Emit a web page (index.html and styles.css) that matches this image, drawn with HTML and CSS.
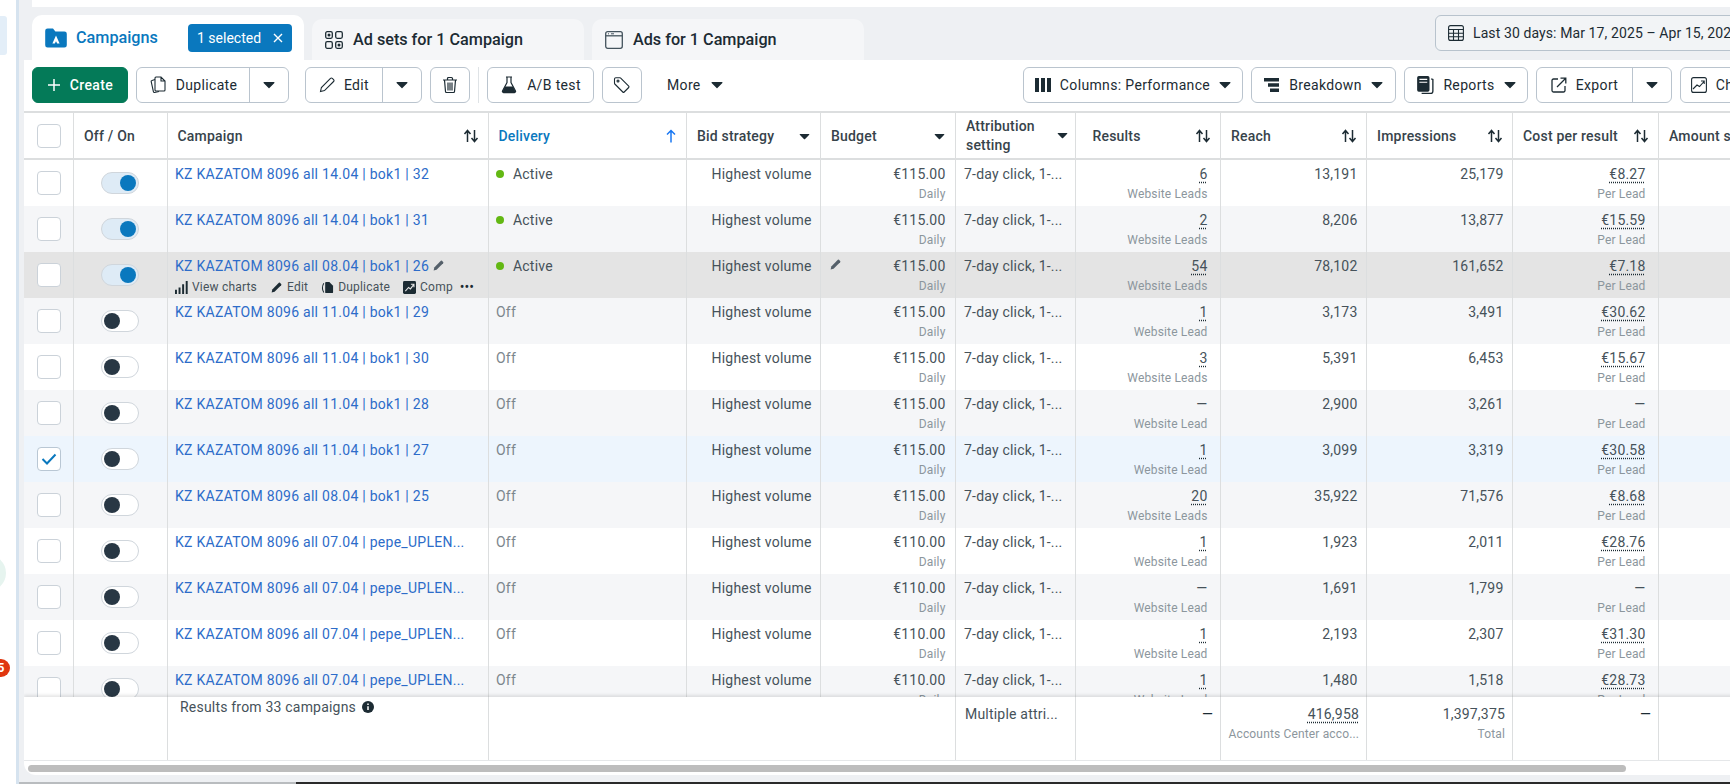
FILE: index.html
```html
<!DOCTYPE html>
<html lang="en">
<head>
<meta charset="utf-8">
<title>Campaigns</title>
<link rel="stylesheet" href="styles.css">
</head>
<body>
<svg class="defs" width="0" height="0" aria-hidden="true">
  <symbol id="caret" viewBox="0 0 12 8"><path d="M1 1h10a.6.6 0 0 1 .4 1L6.4 7a.6.6 0 0 1-.8 0L.6 2A.6.6 0 0 1 1 1z" fill="currentColor"/></symbol>
  <symbol id="sort" viewBox="0 0 16 14"><path d="M4.5 13V2M1.5 5l3-3.5L7.5 5M11.5 1v11M8.5 9l3 3.5 3-3.5" fill="none" stroke="currentColor" stroke-width="1.5"/></symbol>
  <symbol id="pencil" viewBox="0 0 16 16"><path d="M2 14l.8-3.6L10.900 2.300a1 1 0 0 1 1.400 0l1.400 1.400a1 1 0 0 1 0 1.400L5.600 13.200 2 14z" fill="currentColor"/></symbol>
</svg>

<aside class="rail">
  <div class="rail-tab"></div>
  <div class="rail-mint"></div>
  <div class="rail-badge">5</div>
</aside>

<main class="main">
  <div class="topbar"></div>

  <div class="tabs">
    <div class="tab tab-active">
      <svg class="tab-icon-folder" viewBox="0 0 20 20"><path d="M1 4a2 2 0 0 1 2-2h4.500l2 2.500H17a2 2 0 0 1 2 2V16a2 2 0 0 1-2 2H3a2 2 0 0 1-2-2z" fill="#0a78be"/><path d="M10 8l3 6.500h-2L10 12.800 9 14.500H7z" fill="#fff"/></svg>
      <span class="tab-label-active">Campaigns</span>
      <span class="pill">1 selected <svg class="pill-x" viewBox="0 0 12 12"><path d="M2 2l8 8M10 2l-8 8" stroke="#fff" stroke-width="1.400"/></svg></span>
    </div>
    <div class="tab tab-off">
      <svg class="tab-icon" viewBox="0 0 18 18" fill="none" stroke="#1c2b33" stroke-width="1.300"><rect x=".7" y=".7" width="6.600" height="6.600" rx="1.500"/><rect x="10.700" y=".7" width="6.600" height="6.600" rx="1.500"/><rect x=".7" y="10.700" width="6.600" height="6.600" rx="1.500"/><rect x="10.700" y="10.700" width="6.600" height="6.600" rx="1.500"/><circle cx="4" cy="4" r="1.500" fill="#1c2b33" stroke="none"/><circle cx="14" cy="14" r="1.500" fill="#1c2b33" stroke="none"/></svg>
      <span>Ad sets for 1 Campaign</span>
    </div>
    <div class="tab tab-off">
      <svg class="tab-icon" viewBox="0 0 18 18" fill="none" stroke="#44535d" stroke-width="1.300"><rect x=".7" y=".7" width="16.600" height="16.600" rx="2"/><path d="M.7 4.800h16.600"/><path d="M3 2.800h1M6 2.800h3" stroke-width="1"/></svg>
      <span>Ads for 1 Campaign</span>
    </div>
    <button class="date">
      <svg class="ic16" viewBox="0 0 16 16" fill="none" stroke="#1c2b33" stroke-width="1.100"><rect x=".6" y=".6" width="14.800" height="14.800" rx="2"/><path d="M.6 4.500h14.800M.6 8.200h14.800M.6 11.800h14.800M5.500 4.500v10.900M10.500 4.500v10.900"/></svg>
      <span>Last 30 days: Mar 17, 2025 – Apr 15, 2025</span>
    </button>
  </div>

  <section class="panel">
    <div class="toolbar">
      <div class="toolbar-left">
        <button class="btn btn-create"><svg class="ic14" viewBox="0 0 14 14"><path d="M7 1v12M1 7h12" stroke="#fff" stroke-width="1.500"/></svg>Create</button>
        <div class="split split-dup">
          <button class="btn-main"><svg class="ic18" viewBox="0 0 16 18" fill="none" stroke="#1c2b33" stroke-width="1.100"><path d="M6 1h5l4 4v9a1 1 0 0 1-1 1H6a1 1 0 0 1-1-1V2a1 1 0 0 1 1-1zM11 1v4h4"/><path d="M5 3.500L2 4.500a1 1 0 0 0-.8 1.200l2.200 10a1 1 0 0 0 1.200.8L9 15.500"/></svg>Duplicate</button>
          <button class="btn-caret"><svg class="caret" width="12" height="8"><use href="#caret"/></svg></button>
        </div>
        <div class="split split-edit">
          <button class="btn-main"><svg class="ic16" viewBox="0 0 16 16" fill="none" stroke="#1c2b33" stroke-width="1.100"><path d="M1.500 14.500l.9-4L11.500 1.400a1.300 1.300 0 0 1 1.800 0l1.300 1.300a1.300 1.300 0 0 1 0 1.800L5.500 13.600z"/></svg>Edit</button>
          <button class="btn-caret"><svg class="caret" width="12" height="8"><use href="#caret"/></svg></button>
        </div>
        <button class="btn btn-icon"><svg class="ic18" viewBox="0 0 16 18" fill="none" stroke="#1c2b33" stroke-width="1.200"><path d="M1 4h14M5.500 4V2.500a1 1 0 0 1 1-1h3a1 1 0 0 1 1 1V4M2.500 4l1 11.500a1 1 0 0 0 1 1h7a1 1 0 0 0 1-1l1-11.500M6 6.500v8M8 6.500v8M10 6.500v8"/></svg></button>
        <span class="divider"></span>
        <button class="btn btn-ab"><svg class="ic18" viewBox="0 0 16 18"><path d="M5 1h6M6 1v5.500L1.500 15a1.200 1.200 0 0 0 1 1.600h11a1.200 1.200 0 0 0 1-1.600L10 6.500V1" fill="none" stroke="#1c2b33" stroke-width="1.200"/><path d="M4 10.500h8l2.500 5-.5 1H2l-.5-1z" fill="#1c2b33"/></svg>A/B test</button>
        <button class="btn btn-icon btn-tag"><svg class="ic18" viewBox="0 0 18 18" fill="none" stroke="#1c2b33" stroke-width="1.100"><path d="M1.500 3v4.300a1 1 0 0 0 .3.700l8 8a1 1 0 0 0 1.400 0l4.500-4.500a1 1 0 0 0 0-1.400l-8-8a1 1 0 0 0-.7-.3H2.800A1.300 1.300 0 0 0 1.500 3z"/><circle cx="5" cy="5" r="1"/></svg></button>
        <button class="btn-more">More<svg class="caret" width="12" height="8"><use href="#caret"/></svg></button>
      </div>
      <div class="toolbar-right">
        <button class="btn btn-columns"><svg class="ic16" viewBox="0 0 16 14"><path d="M0 0h4v14H0zM6 0h4v14H6zM12 0h4v14h-4z" fill="#1c2b33"/></svg>Columns: Performance<svg class="caret" width="12" height="8"><use href="#caret"/></svg></button>
        <button class="btn btn-break"><svg class="ic16" viewBox="0 0 16 14"><path d="M0 0h15v3.400H0zM4 5.300h11v3.400H4zM6 10.600h9V14H6z" fill="#1c2b33"/></svg>Breakdown<svg class="caret" width="12" height="8"><use href="#caret"/></svg></button>
        <button class="btn btn-reports"><svg class="ic18" viewBox="0 0 16 16"><path d="M1 1.500A1.500 1.500 0 0 1 2.500 0h8A1.500 1.500 0 0 1 12 1.500v11a1.500 1.500 0 0 1-1.500 1.500h-8A1.500 1.500 0 0 1 1 12.500z" fill="#1c2b33"/><path d="M3 3h7M3 5.500h7" stroke="#fff"/><path d="M13.500 2.500l1.500.5v10.500a2 2 0 0 1-2 2H5" fill="none" stroke="#1c2b33" stroke-width="1.200"/></svg>Reports<svg class="caret" width="12" height="8"><use href="#caret"/></svg></button>
        <div class="split split-export">
          <button class="btn-main"><svg class="ic16" viewBox="0 0 16 16" fill="none" stroke="#1c2b33" stroke-width="1.300"><path d="M7 2H2.500A1.500 1.500 0 0 0 1 3.500v10A1.500 1.500 0 0 0 2.500 15h10a1.500 1.500 0 0 0 1.500-1.500V9"/><path d="M6 10l8.500-8.500M9.500 1.200h5.300v5.300"/></svg>Export</button>
          <button class="btn-caret"><svg class="caret" width="12" height="8"><use href="#caret"/></svg></button>
        </div>
        <button class="btn btn-chart"><svg class="ic16" viewBox="0 0 16 16" fill="none" stroke="#1c2b33" stroke-width="1.100"><rect x=".6" y=".6" width="14.800" height="14.800" rx="2"/><path d="M2 12l4-4 2.500 1.500L13 4.500M10 4h3.200v3"/></svg>Charts</button>
      </div>
    </div>

    <div class="grid-scroll">
      <table class="grid">
        <colgroup><col class="c0"><col class="c1"><col class="c2"><col class="c3"><col class="c4"><col class="c5"><col class="c6"><col class="c7"><col class="c8"><col class="c9"><col class="c10"><col class="c11"></colgroup>
        <thead>
          <tr>
            <th class="th-check"><span class="check"></span></th>
            <th><div class="th-in">Off / On</div></th>
            <th><div class="th-in">Campaign<svg class="sort" width="16" height="14"><use href="#sort"/></svg></div></th>
            <th class="th-active"><div class="th-in">Delivery<svg class="sort sort-up" width="10" height="14" viewBox="0 0 10 14"><path d="M5 13.500V1.500M1 5.500l4-4 4 4" fill="none" stroke="currentColor" stroke-width="1.500"/></svg></div></th>
            <th><div class="th-in">Bid strategy<svg class="caret-th" width="11" height="7"><use href="#caret"/></svg></div></th>
            <th><div class="th-in">Budget<svg class="caret-th" width="11" height="7"><use href="#caret"/></svg></div></th>
            <th><div class="th-in">Attribution<br>setting<svg class="caret-th" width="11" height="7"><use href="#caret"/></svg></div></th>
            <th class="th-results"><div class="th-in">Results<svg class="sort" width="16" height="14"><use href="#sort"/></svg></div></th>
            <th><div class="th-in">Reach<svg class="sort" width="16" height="14"><use href="#sort"/></svg></div></th>
            <th><div class="th-in">Impressions<svg class="sort" width="16" height="14"><use href="#sort"/></svg></div></th>
            <th><div class="th-in">Cost per result<svg class="sort" width="16" height="14"><use href="#sort"/></svg></div></th>
            <th class="th-last"><div class="th-in">Amount spent</div></th>
          </tr>
        </thead>
        <tbody>
          <tr><td class="td-check"><span class="check"></span></td><td class="td-toggle"><span class="toggle on"><i></i></span></td><td><a class="name">KZ KAZATOM 8096 all 14.04 | bok1 | 32</a></td><td><span class="dot"></span>Active</td><td class="num">Highest volume</td><td class="num money">€115.00<small>Daily</small></td><td class="attr">7-day click, 1-...</td><td class="num wide"><u>6</u><small>Website Leads</small></td><td class="num">13,191</td><td class="num">25,179</td><td class="num wide"><u>€8.27</u><small>Per Lead</small></td><td></td></tr>
          <tr><td class="td-check"><span class="check"></span></td><td class="td-toggle"><span class="toggle on"><i></i></span></td><td><a class="name">KZ KAZATOM 8096 all 14.04 | bok1 | 31</a></td><td><span class="dot"></span>Active</td><td class="num">Highest volume</td><td class="num money">€115.00<small>Daily</small></td><td class="attr">7-day click, 1-...</td><td class="num wide"><u>2</u><small>Website Leads</small></td><td class="num">8,206</td><td class="num">13,877</td><td class="num wide"><u>€15.59</u><small>Per Lead</small></td><td></td></tr>
          <tr class="hover"><td class="td-check"><span class="check"></span></td><td class="td-toggle"><span class="toggle on"><i></i></span></td><td><a class="name">KZ KAZATOM 8096 all 08.04 | bok1 | 26</a><svg class="name-pen" width="13" height="13"><use href="#pencil"/></svg>
            <div class="actions">
              <span class="act"><svg class="act-ic" viewBox="0 0 12 12"><path d="M0 8h1.800v4H0zM3.300 6h1.800v6H3.300zM6.600 3h1.800v9H6.600zM9.900 0h1.800v12H9.900z" fill="#1c2b33"/></svg>View charts</span>
              <span class="act"><svg class="act-ic" viewBox="0 0 16 16"><path d="M2 14l.8-3.600L10.900 2.300a1 1 0 0 1 1.400 0l1.400 1.400a1 1 0 0 1 0 1.400L5.600 13.200z" fill="#1c2b33"/></svg>Edit</span>
              <span class="act"><svg class="act-ic" viewBox="0 0 14 14"><path d="M5.500 1H9l4 4v7a1 1 0 0 1-1 1H5.500a1 1 0 0 1-1-1V2a1 1 0 0 1 1-1z" fill="#1c2b33"/><path d="M3 2.500C1.500 5 1 9 3 12.500" fill="none" stroke="#1c2b33" stroke-width="1.100"/></svg>Duplicate</span>
              <span class="act"><svg class="act-ic" viewBox="0 0 14 14"><rect width="14" height="14" rx="1.500" fill="#1c2b33"/><path d="M2.500 11l3.500-4 2 1.500L11.500 4M8.500 3.500h3.300v3.300" fill="none" stroke="#e4e4e4" stroke-width="1.200"/></svg>Comp</span>
              <span class="dots">•••</span>
            </div></td><td><span class="dot"></span>Active</td><td class="num">Highest volume</td><td class="num money td-budget"><svg class="budget-pen" width="13" height="13"><use href="#pencil"/></svg>€115.00<small>Daily</small></td><td class="attr">7-day click, 1-...</td><td class="num wide"><u>54</u><small>Website Leads</small></td><td class="num">78,102</td><td class="num">161,652</td><td class="num wide"><u>€7.18</u><small>Per Lead</small></td><td></td></tr>
          <tr><td class="td-check"><span class="check"></span></td><td class="td-toggle"><span class="toggle"><i></i></span></td><td><a class="name">KZ KAZATOM 8096 all 11.04 | bok1 | 29</a></td><td class="off">Off</td><td class="num">Highest volume</td><td class="num money">€115.00<small>Daily</small></td><td class="attr">7-day click, 1-...</td><td class="num wide"><u>1</u><small>Website Lead</small></td><td class="num">3,173</td><td class="num">3,491</td><td class="num wide"><u>€30.62</u><small>Per Lead</small></td><td></td></tr>
          <tr><td class="td-check"><span class="check"></span></td><td class="td-toggle"><span class="toggle"><i></i></span></td><td><a class="name">KZ KAZATOM 8096 all 11.04 | bok1 | 30</a></td><td class="off">Off</td><td class="num">Highest volume</td><td class="num money">€115.00<small>Daily</small></td><td class="attr">7-day click, 1-...</td><td class="num wide"><u>3</u><small>Website Leads</small></td><td class="num">5,391</td><td class="num">6,453</td><td class="num wide"><u>€15.67</u><small>Per Lead</small></td><td></td></tr>
          <tr><td class="td-check"><span class="check"></span></td><td class="td-toggle"><span class="toggle"><i></i></span></td><td><a class="name">KZ KAZATOM 8096 all 11.04 | bok1 | 28</a></td><td class="off">Off</td><td class="num">Highest volume</td><td class="num money">€115.00<small>Daily</small></td><td class="attr">7-day click, 1-...</td><td class="num wide">—<small>Website Lead</small></td><td class="num">2,900</td><td class="num">3,261</td><td class="num wide">—<small>Per Lead</small></td><td></td></tr>
          <tr class="selected"><td class="td-check"><span class="check checked"><svg viewBox="0 0 16 12" width="16" height="12"><path d="M1.500 6l4.500 4.500L14.500 1.500" fill="none" stroke="#0a78be" stroke-width="2"/></svg></span></td><td class="td-toggle"><span class="toggle"><i></i></span></td><td><a class="name">KZ KAZATOM 8096 all 11.04 | bok1 | 27</a></td><td class="off">Off</td><td class="num">Highest volume</td><td class="num money">€115.00<small>Daily</small></td><td class="attr">7-day click, 1-...</td><td class="num wide"><u>1</u><small>Website Lead</small></td><td class="num">3,099</td><td class="num">3,319</td><td class="num wide"><u>€30.58</u><small>Per Lead</small></td><td></td></tr>
          <tr><td class="td-check"><span class="check"></span></td><td class="td-toggle"><span class="toggle"><i></i></span></td><td><a class="name">KZ KAZATOM 8096 all 08.04 | bok1 | 25</a></td><td class="off">Off</td><td class="num">Highest volume</td><td class="num money">€115.00<small>Daily</small></td><td class="attr">7-day click, 1-...</td><td class="num wide"><u>20</u><small>Website Leads</small></td><td class="num">35,922</td><td class="num">71,576</td><td class="num wide"><u>€8.68</u><small>Per Lead</small></td><td></td></tr>
          <tr><td class="td-check"><span class="check"></span></td><td class="td-toggle"><span class="toggle"><i></i></span></td><td><a class="name">KZ KAZATOM 8096 all 07.04 | pepe_UPLEN...</a></td><td class="off">Off</td><td class="num">Highest volume</td><td class="num money">€110.00<small>Daily</small></td><td class="attr">7-day click, 1-...</td><td class="num wide"><u>1</u><small>Website Lead</small></td><td class="num">1,923</td><td class="num">2,011</td><td class="num wide"><u>€28.76</u><small>Per Lead</small></td><td></td></tr>
          <tr><td class="td-check"><span class="check"></span></td><td class="td-toggle"><span class="toggle"><i></i></span></td><td><a class="name">KZ KAZATOM 8096 all 07.04 | pepe_UPLEN...</a></td><td class="off">Off</td><td class="num">Highest volume</td><td class="num money">€110.00<small>Daily</small></td><td class="attr">7-day click, 1-...</td><td class="num wide">—<small>Website Lead</small></td><td class="num">1,691</td><td class="num">1,799</td><td class="num wide">—<small>Per Lead</small></td><td></td></tr>
          <tr><td class="td-check"><span class="check"></span></td><td class="td-toggle"><span class="toggle"><i></i></span></td><td><a class="name">KZ KAZATOM 8096 all 07.04 | pepe_UPLEN...</a></td><td class="off">Off</td><td class="num">Highest volume</td><td class="num money">€110.00<small>Daily</small></td><td class="attr">7-day click, 1-...</td><td class="num wide"><u>1</u><small>Website Lead</small></td><td class="num">2,193</td><td class="num">2,307</td><td class="num wide"><u>€31.30</u><small>Per Lead</small></td><td></td></tr>
          <tr><td class="td-check"><span class="check"></span></td><td class="td-toggle"><span class="toggle"><i></i></span></td><td><a class="name">KZ KAZATOM 8096 all 07.04 | pepe_UPLEN...</a></td><td class="off">Off</td><td class="num">Highest volume</td><td class="num money">€110.00<small>Daily</small></td><td class="attr">7-day click, 1-...</td><td class="num wide"><u>1</u><small>Website Lead</small></td><td class="num">1,480</td><td class="num">1,518</td><td class="num wide"><u>€28.73</u><small>Per Lead</small></td><td></td></tr>
        </tbody>
      </table>
    </div>

    <table class="grid grid-foot">
      <colgroup><col class="c0"><col class="c1"><col class="c2"><col class="c3"><col class="c4"><col class="c5"><col class="c6"><col class="c7"><col class="c8"><col class="c9"><col class="c10"><col class="c11"></colgroup>
      <tr>
        <td colspan="2"></td>
        <td class="foot-label">Results from 33 campaigns <svg class="info" viewBox="0 0 12 12" width="12" height="12"><circle cx="6" cy="6" r="6" fill="#1c2b33"/><path d="M6 5.200v3.800M6 2.600v1.400" stroke="#fff" stroke-width="1.500"/></svg></td>
        <td colspan="3"></td>
        <td class="attr foot-attr">Multiple attri...</td>
        <td class="num foot-num foot-dash">—</td>
        <td class="num foot-num"><u>416,958</u><small>Accounts Center acco...</small></td>
        <td class="num foot-num">1,397,375<small>Total</small></td>
        <td class="num foot-num foot-dash">—</td>
        <td></td>
      </tr>
    </table>

    <div class="hscroll"><div class="hscroll-thumb"></div></div>
  </section>
  <div class="bottom-line"></div>
</main>
</body>
</html>
```

FILE: styles.css
```css
* { box-sizing: border-box; }
html, body { margin: 0; height: 784px; overflow: hidden; }
body {
  display: flex;
  background: #fff;
  font-family: Roboto, "Noto Sans", Arial, sans-serif;
  font-size: 14px;
  color: #1c2b33;
}
.defs { position: absolute; }
button { font: inherit; color: inherit; background: none; border: 0; padding: 0; }

/* left rail */
.rail { flex: 0 0 16px; background: #fff; overflow: hidden; display: flex; flex-direction: column; }
.rail-tab { width: 7px; height: 39px; margin-top: 16px; background: #e3eef8; border-radius: 0 3px 3px 0; }
.rail-mint { width: 36px; height: 36px; margin: 500px 0 0 -30px; border-radius: 50%; background: #e6f4ef; }
.rail-badge { width: 18px; height: 18px; margin: 68px 0 0 -8px; border-radius: 50%; background: #e0360f; color: #fff; font-size: 12px; font-weight: 700; line-height: 18px; text-align: center; }

/* main column */
.main {
  flex: 1;
  min-width: 0;
  height: 784px;
  padding-left: 5px;
  border-left: 3px solid #d6e3ef;
  background: #eef0f3;
  overflow: hidden;
  display: flex;
  flex-direction: column;
}
.topbar { height: 7px; margin-left: 8px; background: #fff; flex: none; }

/* tabs */
.tabs { display: flex; align-items: flex-end; gap: 8px; height: 53px; margin-left: 8px; flex: none; width: 1790px; }
.tab { flex: 0 0 272px; display: flex; align-items: center; border-radius: 10px 10px 0 0; font-size: 16.200px; font-weight: 500; }
.tab-active { height: 45px; background: #fff; padding: 0 12px 0 12px; }
.tab-off { height: 41px; background: #f5f6f8; padding: 0 0 0 13px; gap: 10px; }
.tab-icon { width: 18px; height: 18px; flex: none; }
.tab-icon-folder { width: 24px; height: 24px; flex: none; }
.tab-label-active { color: #0a78be; margin-left: 8px; font-weight: 500; }
.pill { margin-left: auto; width: 104px; height: 28px; border-radius: 4px; background: #0a78be; color: #fff; font-size: 14px; font-weight: 400; display: flex; align-items: center; justify-content: space-between; padding: 0 8px 0 9px; }
.pill-x { width: 12px; height: 12px; }
.date { margin-left: 563px; align-self: flex-start; margin-top: 8px; flex: none; width: 420px; height: 36px; display: flex; align-items: center; gap: 9px; padding-left: 12px; border: 1px solid #b8c3cd; border-radius: 6px; background: #f2f4f6; white-space: nowrap; letter-spacing: .1px; }

/* panel */
.panel { flex: none; width: 1790px; background: #fff; border-radius: 0 0 0 12px; overflow: hidden; }
.toolbar { height: 51px; padding: 7px 0 0 8px; display: flex; }
.toolbar-left { flex: 0 0 991px; display: flex; align-items: flex-start; }
.toolbar-right { display: flex; gap: 8px; align-items: flex-start; }

.btn, .split { height: 36px; border: 1px solid #bac4ce; border-radius: 6px; background: #fff; flex: none; display: flex; align-items: center; white-space: nowrap; letter-spacing: .35px; }
.btn { gap: 9px; justify-content: center; }
.btn-main { height: 100%; display: flex; align-items: center; justify-content: center; gap: 9px; border-right: 1px solid #bac4ce; letter-spacing: .35px; }
.btn-caret { flex: 1; height: 100%; display: flex; align-items: center; justify-content: center; }
.caret { flex: none; color: #1c2b33; }
.ic16 { width: 16px; height: 16px; flex: none; }
.ic18 { width: 18px; height: 18px; flex: none; }
.ic14 { width: 14px; height: 14px; flex: none; }

.btn-create { width: 96px; background: #047a58; border-color: #047a58; color: #fff; font-weight: 500; }
.split-dup { width: 153px; margin-left: 8px; }
.split-dup .btn-main { width: 113px; }
.split-edit { width: 117px; margin-left: 16px; }
.split-edit .btn-main { width: 77px; }
.btn-icon { width: 40px; margin-left: 8px; }
.divider { width: 1px; height: 36px; margin-left: 8px; background: #dfe3e6; flex: none; }
.btn-ab { width: 107px; margin-left: 8px; }
.btn-tag { margin-left: 8px; }
.btn-more { height: 36px; margin-left: 25px; display: flex; align-items: center; gap: 10px; letter-spacing: .35px; }
.btn-columns { width: 220px; }
.btn-break { width: 145px; }
.btn-reports { width: 124px; }
.split-export { width: 136px; }
.split-export .btn-main { width: 96px; }
.btn-chart { width: 90px; }

/* grid */
.grid-scroll { height: 586px; overflow: hidden; }
.grid { table-layout: fixed; border-collapse: separate; border-spacing: 0; width: 1781px; }
.c0 { width: 50px; } .c1 { width: 93.5px; } .c2 { width: 321px; } .c3 { width: 198.5px; }
.c4 { width: 134px; } .c5 { width: 135px; } .c6 { width: 119.5px; } .c7 { width: 145.5px; }
.c8, .c9, .c10 { width: 146px; } .c11 { width: 146px; }

th { height: 49px; padding: 0; border-top: 2px solid #dcdedf; border-bottom: 2px solid #dcdedf; border-right: 1px solid #dcdedf; font-weight: 500; text-align: left; color: #37434b; background: #fff; line-height: 19px; }
.th-check { border-right: 1px solid #dcdedf; }
.th-in { display: flex; align-items: center; justify-content: space-between; padding: 1px 9px 0 10px; white-space: nowrap; position: relative; letter-spacing: .2px; }
.th-active { color: #0a78be; }
.th-results .th-in { padding-left: 17px; }
.th-last .th-in { justify-content: flex-start; }
.sort { flex: none; color: #1c2b33; }
.sort-up { color: #1877f2; margin-right: 1px; }
.caret-th { flex: none; color: #1c2b33; margin-right: 1px; }
.th-in:has(br) { display: block; padding-right: 26px; }
.th-in:has(br) .caret-th { position: absolute; right: 6px; top: 16px; }

td { height: 46px; padding: 4px 8.5px 0 7.5px; vertical-align: top; line-height: 20px; color: #46525a; border-right: 1px solid #dcdedf; overflow: hidden; white-space: nowrap; letter-spacing: .2px; }
tbody tr:nth-child(even) td { background: #f5f6f8; }
tbody tr.hover td { background: #e4e4e4; }
tbody tr.selected td { background: #edf5fd; }
tbody td:nth-child(1), tbody td:nth-child(2) { padding: 0; }

.num { text-align: right; }
.money { padding-right: 9.5px; }
.wide { padding-right: 12.5px; }
.num small { display: block; font-size: 12px; line-height: 16px; margin-top: 2px; color: #8c969d; letter-spacing: .15px; }
u { text-decoration: underline dotted #1c2b33; text-underline-offset: 3px; }
.attr { padding-left: 8px; }
.off { color: #7c868d; }
.name { color: #2d6cc9; letter-spacing: .27px; }
.name-pen { margin-left: 3px; vertical-align: -1px; color: #55606a; }
.dot { display: inline-block; width: 8px; height: 8px; border-radius: 50%; background: #63b813; margin-right: 9px; vertical-align: 1px; }

.td-check, .th-check { text-align: center; }
.check { display: inline-block; width: 24px; height: 24px; border: 1px solid #cbd2d9; border-radius: 4px; background: #fff; vertical-align: top; }
.td-check .check { margin-top: 11px; }
th .check { margin-top: 1px; }
.checked { display: inline-flex; align-items: center; justify-content: center; border-color: #b9c7d4; }
.td-toggle { text-align: center; }
.toggle { display: inline-flex; align-items: center; width: 38px; height: 22px; margin-top: 12px; padding: 0 2px; border: 1px solid #d0d6dc; border-radius: 11px; background: #fff; vertical-align: top; }
.toggle i { width: 16px; height: 16px; border-radius: 50%; background: #283744; }
.toggle.on { justify-content: flex-end; background: #deebf6; }
.toggle.on i { background: #0a78be; }

.actions { display: flex; align-items: center; gap: 13px; height: 18px; margin-top: 2px; font-size: 12px; color: #46525a; letter-spacing: .2px; }
.act { display: flex; align-items: center; gap: 4px; }
.act-ic { width: 13px; height: 13px; flex: none; }
.dots { font-size: 14px; color: #1c2b33; letter-spacing: 0; margin-left: -6px; }
.td-budget { position: relative; }
.budget-pen { position: absolute; left: 8px; top: 6px; color: #55606a; }

.grid-foot { box-shadow: 0 -2px 3px rgba(0, 0, 0, .1); position: relative; }
.grid-foot td { height: 63px; padding-top: 7px; background: #fff; }
.grid-foot .foot-label { padding-left: 12.5px; }
.grid-foot .foot-attr { padding-left: 9px; }
.grid-foot .foot-num { padding-right: 7px; }
.foot-dash { color: #1c2b33; }
.info { vertical-align: -1px; margin-left: 2px; }

.hscroll { height: 15px; padding: 4px 0 0 4px; border-top: 1px solid #e6e8ea; }
.hscroll-thumb { width: 1598px; height: 7px; border-radius: 4px; background: #bdbdbd; }

.bottom-line { flex: none; height: 2px; margin: 7px 0 0 -8px; background: linear-gradient(to right, #b9bcbf 0 280px, #2a2a2a 280px); }
```
